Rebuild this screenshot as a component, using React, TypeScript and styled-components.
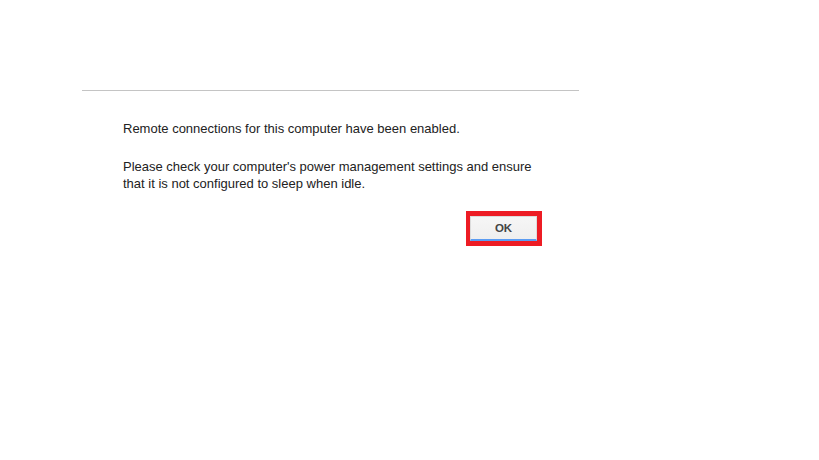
import styled, { createGlobalStyle } from "styled-components";

const GlobalStyle = createGlobalStyle`
  html, body {
    margin: 0;
    padding: 0;
    background: #ffffff;
  }
  body {
    font-family: "Liberation Sans", Arial, sans-serif;
  }
`;

const Page = styled.div`
  width: 819px;
  height: 460px;
  padding: 90px 0 0 82px;
  box-sizing: border-box;
`;

const Dialog = styled.div`
  width: 497px;
  border-top: 1px solid #c4c4c4;
  padding: 29px 42px 0 41px;
  box-sizing: border-box;
  display: flex;
  flex-direction: column;
`;

const Message = styled.p<{ $gap?: number }>`
  margin: 0 0 ${(p) => p.$gap ?? 0}px 0;
  font-size: 13px;
  line-height: 17px;
  color: #222222;
  white-space: nowrap;
`;

const Footer = styled.div`
  display: flex;
  justify-content: flex-end;
  margin-top: 19px;
  margin-right: -5px;
`;

const Highlight = styled.div`
  border: 5px solid #ed1c24;
  border-left-width: 4px;
  display: flex;
`;

const Button = styled.button`
  width: 67px;
  height: 25px;
  padding: 0;
  border: 1px solid #dcdcdc;
  border-bottom: 2px solid #5b9cf2;
  background: linear-gradient(#f6f6f6, #efefef);
  font-family: "Liberation Sans", Arial, sans-serif;
  font-size: 11.5px;
  font-weight: bold;
  color: #444444;
  cursor: pointer;
`;

export default function App() {
  return (
    <>
      <GlobalStyle />
      <Page>
        <Dialog>
          <Message $gap={21}>
            Remote connections for this computer have been enabled.
          </Message>
          <Message>
            Please check your computer's power management settings and ensure
            <br />
            that it is not configured to sleep when idle.
          </Message>
          <Footer>
            <Highlight>
              <Button>OK</Button>
            </Highlight>
          </Footer>
        </Dialog>
      </Page>
    </>
  );
}
